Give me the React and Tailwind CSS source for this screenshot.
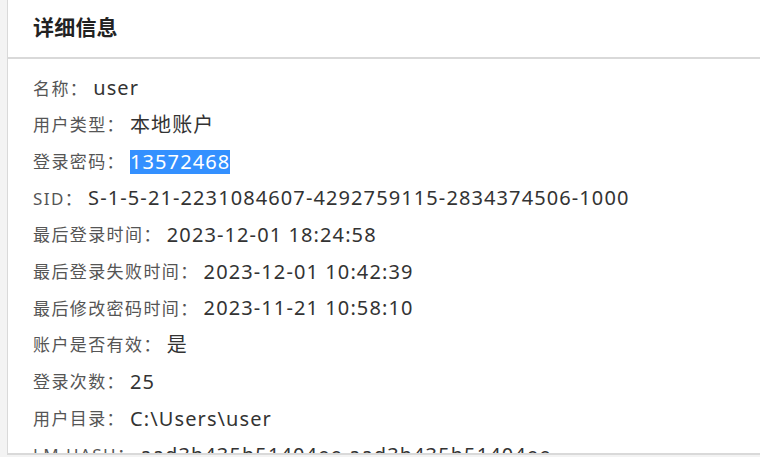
import React from "react";

const rows = [
  { label: "名称：", value: "user" },
  { label: "用户类型：", value: "本地账户" },
  { label: "登录密码：", value: "13572468", selected: true },
  { label: "SID：", value: "S-1-5-21-2231084607-4292759115-2834374506-1000" },
  { label: "最后登录时间：", value: "2023-12-01 18:24:58" },
  { label: "最后登录失败时间：", value: "2023-12-01 10:42:39" },
  { label: "最后修改密码时间：", value: "2023-11-21 10:58:10" },
  { label: "账户是否有效：", value: "是" },
  { label: "登录次数：", value: "25" },
  { label: "用户目录：", value: "C:\\Users\\user" },
  { label: "LM HASH：", value: "aad3b435b51404ee aad3b435b51404ee" },
];

export default function App() {
  return (
    <div
      className="w-[760px] h-[457px] bg-[#f3f3f3] pl-[7px] overflow-hidden"
      style={{ fontFamily: '"Noto Sans", "Noto Sans CJK SC", sans-serif' }}
    >
      <div className="h-[455px] bg-white border-l border-b-2 border-[#d9d9d9] overflow-hidden">
        <div className="h-[59px] border-b-2 border-[#d9d9d9] flex items-center pl-[25px] pb-[1px]">
          <h2 className="text-[21px] font-bold text-[#222] tracking-[0.2px]">详细信息</h2>
        </div>
        <div className="pt-[11px] pl-[25px]">
          {rows.map((r) => (
            <div key={r.label} className="h-[36.7px] flex items-center whitespace-nowrap">
              <span className="text-[#555] text-[17px] tracking-[1.4px]">{r.label}</span>
              <span
                className={
                  r.selected
                    ? "ml-[5px] bg-[#3390ff] text-white text-[20px] leading-[24px] tracking-[1.1px]"
                    : "ml-[5px] text-[#333] text-[20px] tracking-[1.1px]"
                }
              >
                {r.value}
              </span>
            </div>
          ))}
        </div>
      </div>
    </div>
  );
}
